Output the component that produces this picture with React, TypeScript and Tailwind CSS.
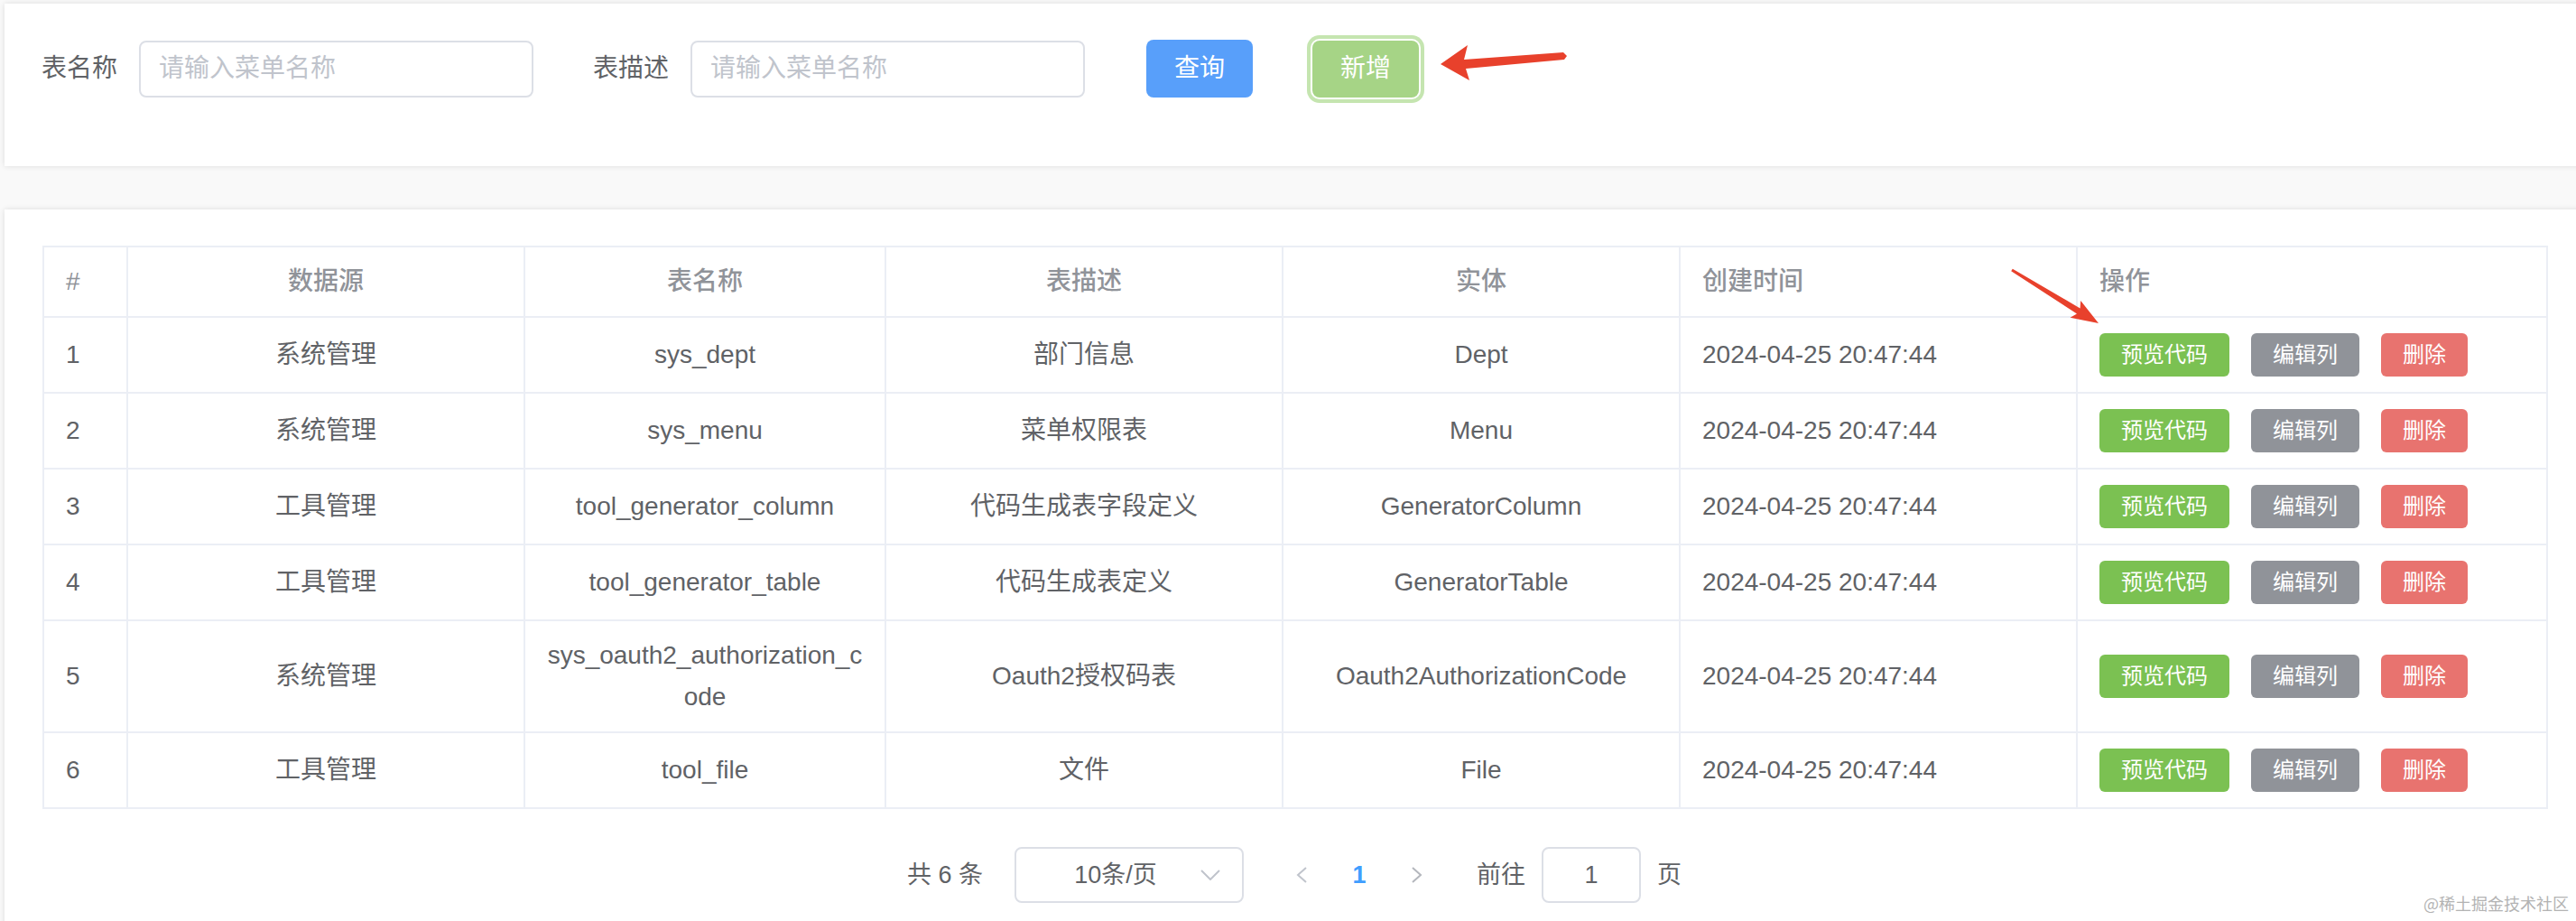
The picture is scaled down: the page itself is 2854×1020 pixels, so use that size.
import React from "react";

type Row = {
  id: number;
  source: string;
  name: string;
  desc: string;
  entity: string;
};

const rows: Row[] = [
  { id: 1, source: "系统管理", name: "sys_dept", desc: "部门信息", entity: "Dept" },
  { id: 2, source: "系统管理", name: "sys_menu", desc: "菜单权限表", entity: "Menu" },
  { id: 3, source: "工具管理", name: "tool_generator_column", desc: "代码生成表字段定义", entity: "GeneratorColumn" },
  { id: 4, source: "工具管理", name: "tool_generator_table", desc: "代码生成表定义", entity: "GeneratorTable" },
  { id: 5, source: "系统管理", name: "sys_oauth2_authorization_code", desc: "Oauth2授权码表", entity: "Oauth2AuthorizationCode" },
  { id: 6, source: "工具管理", name: "tool_file", desc: "文件", entity: "File" },
];

const cell = "border-[2px] border-[#ebeef5] px-[24px] py-[15px] leading-[46px] align-middle";

function SearchInput({ placeholder }: { placeholder: string }) {
  return (
    <div className="flex h-[63px] w-[437px] items-center rounded-[8px] border-[2px] border-[#dcdfe6] bg-white pl-[20px] text-[28px] text-[#c0c4cc]">
      {placeholder}
    </div>
  );
}

function Pagination() {
  return (
    <div className="mt-[42px] flex items-center justify-center text-[27px] text-[#606266]">
      <span className="whitespace-pre">共 6 条</span>
      <div className="ml-[35px] flex h-[62px] w-[254px] items-center rounded-[8px] border-[2px] border-[#dcdfe6] pl-[10px] pr-[24px]">
        <span className="flex-1 pl-[6px] text-center">10条/页</span>
        <svg width="22" height="12" viewBox="0 0 22 12" fill="none">
          <path d="M1 1 L11 11 L21 1" stroke="#c0c4cc" strokeWidth="2" />
        </svg>
      </div>
      <div className="ml-[32px] flex w-[64px] justify-center">
        <svg width="12" height="18" viewBox="0 0 12 18" fill="none">
          <path d="M11 1 L2 9 L11 17" stroke="#c0c4cc" strokeWidth="2" />
        </svg>
      </div>
      <div className="flex w-[64px] justify-center font-bold text-[#409eff]">1</div>
      <div className="flex w-[64px] justify-center">
        <svg width="12" height="18" viewBox="0 0 12 18" fill="none">
          <path d="M1 1 L10 9 L1 17" stroke="#b4b7bd" strokeWidth="2" />
        </svg>
      </div>
      <span className="ml-[34px]">前往</span>
      <div className="ml-[18px] flex h-[62px] w-[110px] items-center justify-center rounded-[8px] border-[2px] border-[#dcdfe6]">
        1
      </div>
      <span className="ml-[18px]">页</span>
    </div>
  );
}

export default function App() {
  return (
    <div
      className="relative h-[1020px] w-[2854px] overflow-hidden bg-[#f9f9f9] pl-[5px] pt-[4px]"
      style={{ fontFamily: '"Liberation Sans", "Noto Sans CJK SC", sans-serif' }}
    >
      <div className="h-[180px] w-[2870px] bg-white pl-[41px] pt-[40px] shadow-[0_0_6px_rgba(0,0,0,0.12)]">
        <div className="flex items-center text-[28px] text-[#606266]">
          <label className="pr-[24px]">表名称</label>
          <SearchInput placeholder="请输入菜单名称" />
          <label className="ml-[66px] pr-[24px]">表描述</label>
          <SearchInput placeholder="请输入菜单名称" />
          <button className="ml-[68px] h-[64px] w-[118px] rounded-[8px] bg-[#589ffa] text-[28px] text-white">
            查询
          </button>
          <button className="ml-[66px] h-[63px] w-[118px] rounded-[8px] bg-[#a6d486] text-[28px] text-white shadow-[0_0_0_2px_#ffffff,0_0_0_6px_#c5e5b0]">
            新增
          </button>
        </div>
      </div>

      <div className="mt-[48px] h-[900px] w-[2870px] bg-white pl-[42px] pt-[40px] shadow-[0_0_6px_rgba(0,0,0,0.12)]">
        <div className="w-[2774px]">
          <table className="w-[2774px] table-fixed border-collapse text-[28px] text-[#606266]">
            <colgroup>
              <col className="w-[93px]" />
              <col className="w-[440px]" />
              <col className="w-[400px]" />
              <col className="w-[440px]" />
              <col className="w-[440px]" />
              <col className="w-[440px]" />
              <col className="w-[521px]" />
            </colgroup>
            <thead>
              <tr className="h-[78px] text-[#909399]">
                <th className={`${cell} text-left font-medium`}>#</th>
                <th className={`${cell} text-center font-medium`}>数据源</th>
                <th className={`${cell} text-center font-medium`}>表名称</th>
                <th className={`${cell} text-center font-medium`}>表描述</th>
                <th className={`${cell} text-center font-medium`}>实体</th>
                <th className={`${cell} text-left font-medium`}>创建时间</th>
                <th className={`${cell} text-left font-medium`}>操作</th>
              </tr>
            </thead>
            <tbody>
              {rows.map((row) => (
                <tr key={row.id} className="h-[84px]">
                  <td className={`${cell} text-left`}>{row.id}</td>
                  <td className={`${cell} text-center`}>{row.source}</td>
                  <td className={`${cell} break-all text-center`}>{row.name}</td>
                  <td className={`${cell} text-center`}>{row.desc}</td>
                  <td className={`${cell} text-center`}>{row.entity}</td>
                  <td className={`${cell} text-left`}>2024-04-25 20:47:44</td>
                  <td className={`${cell} text-left`}>
                    <div className="flex items-center gap-[24px] text-[24px] leading-none text-white">
                      <span className="flex h-[48px] items-center rounded-[6px] bg-[#7bc152] px-[24px]">预览代码</span>
                      <span className="flex h-[48px] items-center rounded-[6px] bg-[#909399] px-[24px]">编辑列</span>
                      <span className="flex h-[48px] items-center rounded-[6px] bg-[#e8736f] px-[24px]">删除</span>
                    </div>
                  </td>
                </tr>
              ))}
            </tbody>
          </table>
          <Pagination />
        </div>
      </div>

      {/* annotation arrows */}
      <svg
        className="pointer-events-none absolute left-0 top-0"
        width="2854"
        height="1020"
        viewBox="0 0 2854 1020"
      >
        <polygon
          points="1596,71 1626,50 1622,66 1732,58 1736,62 1733,66 1624,76 1628,89"
          fill="#e8412c"
        />
        <polygon
          points="2325,358 2293.6,351.7 2301,347.4 2228.2,300.3 2229.8,297.7 2304.6,341.4 2305.2,332.9"
          fill="#e8412c"
        />
      </svg>

      <div
        className="absolute bottom-[6px] right-[8px] text-[18px] text-[#b3b3b3]"
        style={{ fontFamily: '"Noto Sans CJK SC", sans-serif' }}
      >
        @稀土掘金技术社区
      </div>
    </div>
  );
}
